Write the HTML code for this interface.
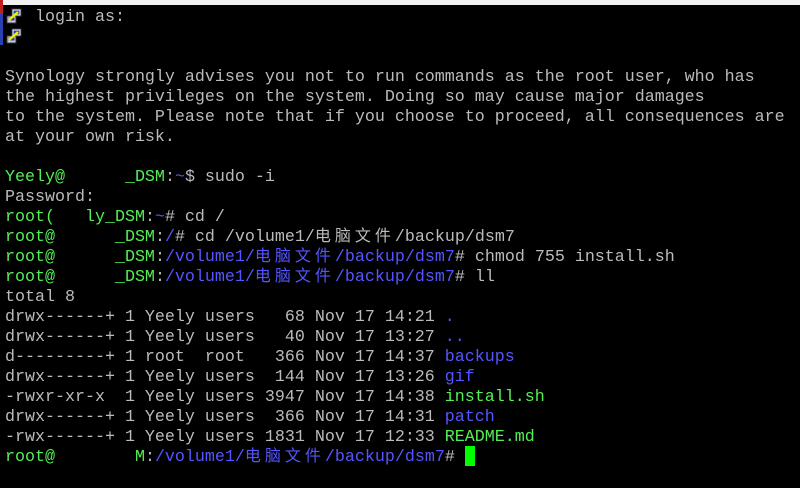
<!DOCTYPE html>
<html><head><meta charset="utf-8"><style>
html,body{margin:0;padding:0;width:800px;height:488px;overflow:hidden;background:#000}
.top{position:absolute;left:0;top:0;width:800px;height:5px;background:#f2f2f2}
.strip{position:absolute;left:0;top:0;width:3px;height:45px;background:linear-gradient(#c02020 0 14px,#2a3fb0 14px)}
pre{position:absolute;left:5px;top:8px;margin:0;font-family:"Liberation Mono",monospace;font-size:16.67px;line-height:20px;color:#bbbbbb;white-space:pre}
.g{color:#55ee55}.b{color:#5555ff}
.c{line-height:0;font-family:"Noto Sans CJK SC",sans-serif;font-size:16px;letter-spacing:4px}
.cur{position:absolute;left:465px;top:446px;width:10px;height:20px;background:#00ff00}
.ic{position:absolute;left:6px;width:16px;height:16px}
</style></head><body>
<div class="top"></div><div class="strip"></div>
<svg class="ic" style="top:8px" viewBox="0 0 16 16"><rect x="6" y="1" width="9" height="7" fill="#fff" stroke="#333"/><rect x="7.5" y="2.5" width="6" height="4" fill="#2a3fb0"/><rect x="1" y="8" width="9" height="7" fill="#ccc" stroke="#333"/><rect x="2.5" y="9.5" width="6" height="3" fill="#2a3fb0"/><path d="M3 12L12 4" stroke="#ee0" stroke-width="2.5"/></svg>
<svg class="ic" style="top:28px" viewBox="0 0 16 16"><rect x="6" y="1" width="9" height="7" fill="#fff" stroke="#333"/><rect x="7.5" y="2.5" width="6" height="4" fill="#2a3fb0"/><rect x="1" y="8" width="9" height="7" fill="#ccc" stroke="#333"/><rect x="2.5" y="9.5" width="6" height="3" fill="#2a3fb0"/><path d="M3 12L12 4" stroke="#ee0" stroke-width="2.5"/></svg>
<pre>   login as:


Synology strongly advises you not to run commands as the root user, who has
the highest privileges on the system. Doing so may cause major damages
to the system. Please note that if you choose to proceed, all consequences are
at your own risk.

<span class="g">Yeely@      _DSM</span>:<span class="b">~</span>$ sudo -i
Password:
<span class="g">root(   ly_DSM</span>:<span class="b">~</span># cd /
<span class="g">root@      _DSM</span>:<span class="b">/</span># cd /volume1/<span class="c">电脑文件</span>/backup/dsm7
<span class="g">root@      _DSM</span>:<span class="b">/volume1/<span class="c">电脑文件</span>/backup/dsm7</span># chmod 755 install.sh
<span class="g">root@      _DSM</span>:<span class="b">/volume1/<span class="c">电脑文件</span>/backup/dsm7</span># ll
total 8
drwx------+ 1 Yeely users   68 Nov 17 14:21 <span class="b">.</span>
drwx------+ 1 Yeely users   40 Nov 17 13:27 <span class="b">..</span>
d---------+ 1 root  root   366 Nov 17 14:37 <span class="b">backups</span>
drwx------+ 1 Yeely users  144 Nov 17 13:26 <span class="b">gif</span>
-rwxr-xr-x  1 Yeely users 3947 Nov 17 14:38 <span class="g">install.sh</span>
drwx------+ 1 Yeely users  366 Nov 17 14:31 <span class="b">patch</span>
-rwx------+ 1 Yeely users 1831 Nov 17 12:33 <span class="g">README.md</span>
<span class="g">root@        M</span>:<span class="b">/volume1/<span class="c">电脑文件</span>/backup/dsm7</span># </pre>
<div class="cur"></div>
</body></html>
